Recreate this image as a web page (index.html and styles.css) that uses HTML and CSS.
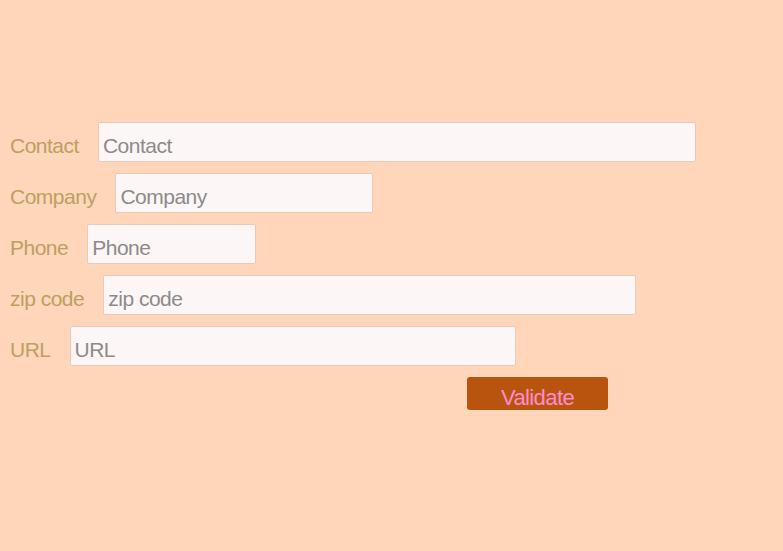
FILE: index.html
```html
<!DOCTYPE html>
<html lang="en">
<head>
<meta charset="utf-8">
<title>Contact form</title>
<link rel="stylesheet" href="styles.css">
</head>
<body>
<form class="form">
  <div class="row">
    <label class="label" for="contact">Contact</label>
    <input class="field field-contact" id="contact" type="text" placeholder="Contact">
  </div>
  <div class="row">
    <label class="label" for="company">Company</label>
    <input class="field field-company" id="company" type="text" placeholder="Company">
  </div>
  <div class="row">
    <label class="label" for="phone">Phone</label>
    <input class="field field-phone" id="phone" type="text" placeholder="Phone">
  </div>
  <div class="row">
    <label class="label" for="zip">zip code</label>
    <input class="field field-zip" id="zip" type="text" placeholder="zip code">
  </div>
  <div class="row">
    <label class="label" for="url">URL</label>
    <input class="field field-url" id="url" type="text" placeholder="URL">
  </div>
  <div class="actions">
    <button class="validate" type="button">Validate</button>
  </div>
</form>
</body>
</html>
```

FILE: styles.css
```css
html, body {
  margin: 0;
  padding: 0;
  height: 100%;
}

body {
  background: #ffd6b9;
  font-family: "Liberation Sans", Arial, sans-serif;
}

.form {
  padding: 122px 0 0 10px;
}

.row {
  display: flex;
  align-items: baseline;
  gap: 19px;
  margin-bottom: 11px;
}

.label {
  color: #bd9f63;
  font-size: 21px;
  letter-spacing: -0.5px;
}

.field {
  box-sizing: border-box;
  height: 40px;
  margin: 0;
  padding: 8px 4px 0;
  border: 1px solid #ebc9b7;
  border-radius: 2px;
  background: #fcf6f6;
  font-family: "Liberation Sans", Arial, sans-serif;
  font-size: 21px;
  letter-spacing: -0.5px;
  color: #555;
  outline: none;
}

.field::placeholder {
  color: #8e8a8a;
  opacity: 1;
}

.field-contact { width: 598px; }
.field-company { width: 258px; }
.field-phone { width: 169px; }
.field-zip { width: 533px; }
.field-url { width: 446px; }

.actions {
  display: flex;
  padding-left: 457px;
}

.validate {
  box-sizing: border-box;
  width: 141px;
  height: 33px;
  margin: 0;
  padding: 8px 0 0;
  border: none;
  border-radius: 3px;
  background: #b8540e;
  color: #ff8ad0;
  font-family: "Liberation Sans", Arial, sans-serif;
  font-size: 22px;
  letter-spacing: -0.6px;
  line-height: 25px;
}
```
